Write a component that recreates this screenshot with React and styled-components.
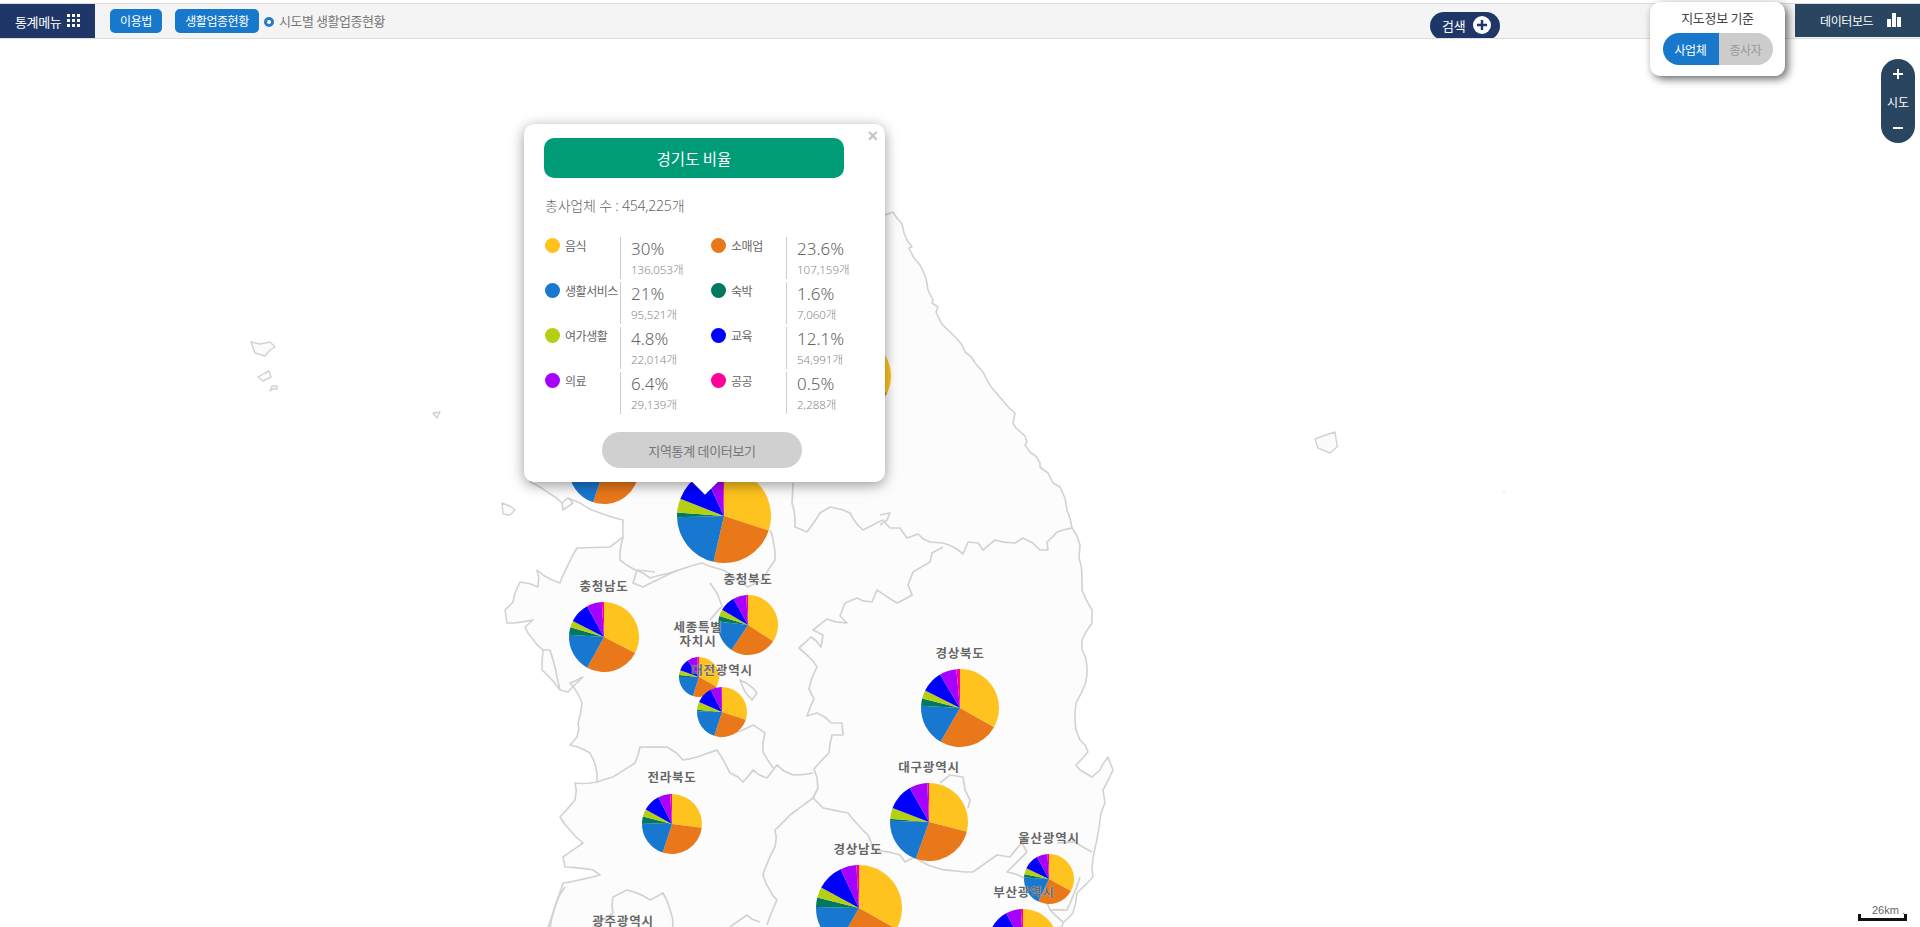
import React from "react";
import styled, { createGlobalStyle } from "styled-components";

const KR = `"Noto Sans CJK KR", "Noto Sans", sans-serif`;
const MAP_TOP = 39;
const COLORS = ["#ffc31f", "#e8781a", "#1878cf", "#00795f", "#b5cf12", "#0000ff", "#a600ff", "#ff0099"];

const GlobalStyle = createGlobalStyle`
  html, body { margin: 0; padding: 0; background: #fff; }
  * { box-sizing: border-box; }
`;

const Page = styled.div`
  position: relative;
  display: flex;
  flex-direction: column;
  height: 927px;
  padding-top: 3px;
  overflow: hidden;
  font-family: ${KR};
`;

const TopBar = styled.header`
  display: flex;
  align-items: stretch;
  flex: 0 0 36px;
  background: #f4f4f4;
  border-top: 1px solid #ddd;
  border-bottom: 1px solid #ddd;
  overflow: hidden;
`;

const MenuBlock = styled.div`
  display: flex;
  align-items: center;
  gap: 6px;
  width: 95px;
  padding-left: 15px;
  background: #1f3768;
  color: #fff;
  font-size: 13px;
  letter-spacing: -0.35px;
`;

const Crumbs = styled.div`
  display: flex;
  align-items: center;
  padding-left: 15px;
  margin-top: -1px;
`;

const BlueChip = styled.span`
  display: flex;
  align-items: center;
  justify-content: center;
  width: ${(p) => p.$w}px;
  height: 24px;
  margin-right: ${(p) => p.$gap}px;
  background: #1878cc;
  border-radius: 5px;
  color: #fff;
  font-size: 12px;
  letter-spacing: -0.45px;
`;

const Bullet = styled.i`
  width: 10px;
  height: 10px;
  margin: 2px 5px 0 0;
  border: 3px solid #2a78c8;
  border-radius: 50%;
  background: #fff;
`;

const CrumbText = styled.span`
  color: #777;
  font-size: 13px;
  letter-spacing: -0.45px;
`;

const SearchPill = styled.div`
  display: flex;
  align-items: center;
  gap: 7px;
  width: 70px;
  height: 28px;
  margin: 8px 0 0 auto;
  padding-left: 12px;
  padding-bottom: 2px;
  background: #1f3768;
  border-radius: 14px;
  color: #fff;
  font-size: 13px;
  letter-spacing: -0.1px;
`;

const DashBlock = styled.div`
  display: flex;
  align-items: center;
  gap: 14px;
  width: 125px;
  height: 34px;
  margin: -1px 0 0 295px;
  padding-left: 25px;
  background: #2a4560;
  color: #fff;
  font-size: 12px;
  letter-spacing: -0.4px;
`;

const InfoBox = styled.div`
  position: absolute;
  top: 2px;
  left: 1650px;
  width: 135px;
  height: 74px;
  padding-top: 6px;
  background: #fff;
  border-radius: 10px;
  box-shadow: 3px 3px 8px rgba(0, 0, 0, 0.6);
  text-align: center;
  color: #444;
  font-size: 13px;
  letter-spacing: -0.3px;
`;

const Toggle = styled.div`
  display: flex;
  width: 110px;
  height: 32px;
  margin: 6px auto 0;
  border-radius: 16px;
  overflow: hidden;
`;

const ToggleSide = styled.span`
  display: flex;
  align-items: center;
  justify-content: center;
  flex: ${(p) => (p.$on ? "0 0 56px" : "1")};
  background: ${(p) => (p.$on ? "#1878cc" : "#ccc")};
  color: ${(p) => (p.$on ? "#fff" : "#999")};
  font-size: 12px;
`;

const ZoomBar = styled.div`
  position: absolute;
  top: 59px;
  left: 1881px;
  display: flex;
  flex-direction: column;
  align-items: center;
  justify-content: space-between;
  width: 34px;
  height: 84px;
  padding: 9px 0;
  background: #2a4560;
  border-radius: 17px;
  color: #fff;
  font-size: 12px;
`;

const MapArea = styled.main`
  position: relative;
  flex: 1;
  background: repeating-linear-gradient(
    to bottom,
    #fff 0,
    #fff 48px,
    #fdfdfd 48px,
    #fdfdfd 49px,
    #fff 49px,
    #fff 256px
  );
`;

const MapSvg = styled.svg`
  display: block;
  width: 1920px;
  height: 888px;
`;

const Region = styled.span`
  position: absolute;
  left: ${(p) => p.$x}px;
  top: ${(p) => p.$y - MAP_TOP}px;
  transform: translate(-50%, -50%);
  color: #666;
  font-size: 12.5px;
  font-weight: 700;
  line-height: 14px;
  letter-spacing: 0.8px;
  text-align: center;
  white-space: pre;
  text-shadow: 0 0 1px #fff;
`;

const Popup = styled.section`
  position: absolute;
  left: 524px;
  top: ${124 - MAP_TOP}px;
  width: 361px;
  height: 358px;
  padding: 14px 20px 0;
  background: #fff;
  border-radius: 10px;
  box-shadow: 0 3px 14px rgba(0, 0, 0, 0.4);
`;

const PopupTip = styled.i`
  position: absolute;
  left: 172px;
  bottom: -9px;
  width: 18px;
  height: 18px;
  background: #fff;
  transform: rotate(45deg);
`;

const CloseMark = styled.span`
  position: absolute;
  right: 7px;
  top: 2px;
  color: #c3c3c3;
  font-family: "Liberation Sans", sans-serif;
  font-size: 18px;
  font-weight: 700;
  line-height: 20px;
`;

const PopupTitle = styled.h2`
  display: flex;
  align-items: center;
  justify-content: center;
  width: 300px;
  height: 40px;
  margin: 0;
  background: #009b77;
  border-radius: 10px;
  color: #fff;
  font-size: 15.5px;
  font-weight: 400;
`;

const Total = styled.p`
  margin: 19px 0 0 1px;
  color: #666;
  font-family: "Noto Sans", ${KR};
  font-size: 14px;
  font-weight: 300;
  line-height: 18px;
  letter-spacing: -0.2px;
`;

const StatGrid = styled.div`
  display: grid;
  grid-template-columns: 166px 1fr;
  grid-auto-rows: 42px;
  row-gap: 3px;
  margin: 22px 0 0 1px;
`;

const StatItem = styled.div`
  display: flex;
`;

const StatName = styled.div`
  display: flex;
  align-items: center;
  gap: 5px;
  flex: 0 0 75px;
  height: 16px;
  color: #666;
  font-size: 12px;
  letter-spacing: -0.45px;
  white-space: nowrap;
`;

const Dot = styled.i`
  flex: 0 0 15px;
  height: 15px;
  border-radius: 50%;
  background: ${(p) => p.$c};
`;

const StatValue = styled.div`
  padding-left: 10px;
  border-left: 1px solid #ccc;
  font-family: "Noto Sans", ${KR};
`;

const Percent = styled.div`
  color: #666;
  font-size: 17px;
  font-weight: 300;
  line-height: 23px;
`;

const Count = styled.div`
  margin-top: 2px;
  color: #888;
  font-size: 11.5px;
  font-weight: 300;
  line-height: 15px;
`;

const DataButton = styled.div`
  display: flex;
  align-items: center;
  justify-content: center;
  width: 200px;
  height: 36px;
  margin: 18px 0 0 58px;
  background: #d0d0d0;
  border-radius: 18px;
  color: #777;
  font-size: 13px;
  letter-spacing: -0.3px;
`;

const Scale = styled.div`
  position: absolute;
  left: 1858px;
  top: ${904 - MAP_TOP}px;
  width: 49px;
  height: 17px;
  padding-left: 11px;
  border: 3px solid #111;
  border-top: 0;
  color: #666;
  font-family: "Liberation Sans", sans-serif;
  font-size: 11px;
  line-height: 13px;
  white-space: nowrap;
  border-image: linear-gradient(to bottom, transparent 0, transparent 11px, #111 11px) 3;
`;

// split long segments and nudge the points so coast lines look hand-surveyed
const rough = (list) => {
  const out = [];
  list.forEach((p, i) => {
    out.push(p);
    const q = list[i + 1];
    if (!q) return;
    const len = Math.hypot(q[0] - p[0], q[1] - p[1]);
    const steps = Math.floor(len / 7);
    for (let s = 1; s < steps; s++) {
      const t = s / steps;
      const n = Math.sin(p[0] * 12.9 + p[1] * 78.2 + s * 37.7) * 1.3;
      out.push([
        +(p[0] + (q[0] - p[0]) * t + n).toFixed(1),
        +(p[1] + (q[1] - p[1]) * t - n * 0.7).toFixed(1),
      ]);
    }
  });
  return out;
};

const pts = (list) => rough(list).map((p) => p.join(",")).join(" ");

const LAND = [
  [885,215],[893,212],[902,224],[904,233],[912,247],[909,248],[920,265],[926,278],[928,290],[933,300],[932,303],[938,307],[936,312],[938,316],[948,330],[958,340],[962,345],[965,352],[975,363],[983,372],[987,380],[1015,413],[1013,423],[1016,428],[1025,436],[1027,442],[1025,445],[1030,452],[1040,463],[1040,467],[1048,473],[1053,483],[1060,487],[1065,498],[1067,510],[1072,528],[1080,545],[1079,558],[1082,577],[1082,590],[1092,610],[1092,623],[1082,640],[1082,650],[1087,667],[1085,685],[1076,703],[1076,730],[1080,740],[1088,752],[1076,765],[1080,770],[1092,777],[1100,770],[1108,757],[1113,770],[1103,790],[1105,803],[1100,820],[1095,848],[1093,858],[1093,877],[1077,893],[1073,913],[1063,923],[1062,927],
  [548,927],[563,883],[600,875],[593,870],[565,867],[563,857],[583,843],[560,817],[575,800],[575,783],[597,782],[597,773],[590,753],[570,745],[577,737],[578,723],[582,703],[570,683],[583,677],[568,692],[560,690],[542,670],[543,650],[525,627],[533,620],[507,623],[505,610],[513,602],[515,593],[520,582],[538,587],[537,570],[560,583],[577,548],[610,547],[623,537],[623,520],[600,513],[580,503],[568,498],[562,503],[530,482],[530,300],
];

const BORDERS = [
  // gyeonggi / gangwon
  [[793,483],[792,503],[795,527],[807,532],[820,513],[830,507],[850,513],[863,530],[883,520],[890,528],[900,528],[907,538],[918,534],[930,542],[943,543],[963,554],[968,542],[978,543],[983,550],[995,540],[1015,543],[1023,538],[1040,550],[1048,550],[1047,542],[1057,532],[1072,528]],
  [[880,515],[890,513],[887,520],[880,525]],
  // gangwon / gyeongbuk, chungbuk
  [[943,547],[932,553],[930,562],[913,572],[908,585],[912,595],[897,603],[877,590],[872,602],[857,598],[845,603],[840,616],[847,623],[827,619],[813,630],[823,635],[821,647],[811,637],[799,648],[808,656],[817,667],[809,689],[814,699],[807,716],[817,713],[831,723],[842,723],[843,735],[832,735],[829,753],[814,769],[818,788],[813,798]],
  // jeonbuk north
  [[813,773],[793,775],[777,765],[773,770],[767,778],[753,770],[743,782],[730,773],[717,750],[697,757],[683,760],[667,747],[640,747],[635,763],[613,777],[597,782]],
  // chungnam / chungbuk
  [[773,768],[763,752],[765,733],[753,725],[743,730],[720,737],[705,715]],
  [[770,530],[775,560],[763,580],[748,587],[723,570],[702,563],[670,573],[650,578],[643,573],[620,560],[623,537]],
  // sejong, daejeon
  [[710,583],[717,593],[722,606],[710,620]],
  [[757,693],[740,680],[745,692],[752,700],[757,693]],
  [[643,587],[633,583],[637,570],[655,572]],
  [[678,570],[643,587]],
  // gyeongnam north and coast side
  [[813,798],[823,808],[848,813],[868,835],[873,850],[900,855],[905,862],[915,857],[937,868],[973,872],[997,855],[1010,857],[1022,843],[1027,852],[1007,872],[1027,880],[1048,905],[1050,910],[1063,922]],
  [[1057,843],[1075,842],[1092,852]],
  [[1080,877],[1067,910],[1050,910]],
  // daegu
  [[940,783],[950,775],[963,777],[965,790],[970,800],[968,808]],
  // jeonbuk / jeonnam
  [[813,798],[790,815],[775,830],[775,847],[763,875],[777,900],[767,925]],
  // gwangju
  [[593,927],[613,913],[613,897],[627,890],[650,900],[663,893],[670,910],[673,927]],
  [[550,927],[557,900],[565,887]],
  [[730,927],[747,915],[760,922]],
  // islet rings
  [[562,503],[563,510],[573,503],[568,498]],
  [[542,650],[550,650],[557,677],[560,690]],
];

const ISLANDS = [
  [[251,342],[260,344],[270,342],[275,347],[270,350],[265,356],[255,353]],
  [[258,377],[265,373],[269,371],[271,377],[263,381]],
  [[270,391],[272,386],[277,386],[277,389],[273,389]],
  [[433,413],[440,412],[437,418]],
  [[1315,439],[1323,436],[1335,432],[1337,445],[1338,446],[1330,453],[1318,448]],
  [[502,503],[510,506],[515,510],[510,515],[503,514]],
];

const PIES = [
  { x: 851, y: 376, r: 40, v: [32, 25, 18, 3, 4, 10, 7, 1] },
  { x: 604, y: 469, r: 35, v: [30, 25, 21, 1.5, 5, 11, 6, 0.5] },
  { x: 724, y: 516, r: 47, v: [30, 23.6, 21, 1.6, 4.8, 12.1, 6.4, 0.5] },
  { x: 604, y: 637, r: 35, v: [32.5, 25.5, 18, 3.5, 3, 9.5, 7, 1] },
  { x: 748, y: 625, r: 30, v: [34, 25, 17.5, 3, 3.5, 8.5, 7, 1] },
  { x: 699, y: 677, r: 20, v: [33, 22, 20, 1.5, 4, 10, 8, 1.5] },
  { x: 722, y: 712, r: 25, v: [30, 25, 20.5, 1, 5, 11, 7.3, 0.2] },
  { x: 672, y: 824, r: 30, v: [27, 28, 20.5, 3.5, 4, 9.5, 6.5, 1] },
  { x: 960, y: 708, r: 39, v: [33, 25, 17.5, 3, 3.5, 9, 7, 1.5] },
  { x: 929, y: 822, r: 39, v: [29, 26.5, 20, 0.8, 4.5, 11, 7.5, 0.7] },
  { x: 859, y: 908, r: 43, v: [33, 25, 17, 3.5, 4, 10, 6, 1] },
  { x: 1049, y: 879, r: 25, v: [33, 24, 19, 2, 4, 10, 7, 1] },
  { x: 1023, y: 944, r: 35, v: [30, 24, 21, 1, 5, 11, 7, 1] },
];

const REGIONS = [
  { name: "충청남도", x: 604, y: 586 },
  { name: "충청북도", x: 748, y: 579 },
  { name: "세종특별\n자치시", x: 698, y: 634 },
  { name: "대전광역시", x: 722, y: 670 },
  { name: "전라북도", x: 672, y: 777 },
  { name: "경상북도", x: 960, y: 653 },
  { name: "대구광역시", x: 929, y: 767 },
  { name: "경상남도", x: 858, y: 849 },
  { name: "울산광역시", x: 1049, y: 838 },
  { name: "부산광역시", x: 1024, y: 892 },
  { name: "광주광역시", x: 623, y: 921 },
];

const STATS = [
  { name: "음식", c: COLORS[0], pct: "30%", n: "136,053개" },
  { name: "소매업", c: COLORS[1], pct: "23.6%", n: "107,159개" },
  { name: "생활서비스", c: COLORS[2], pct: "21%", n: "95,521개" },
  { name: "숙박", c: COLORS[3], pct: "1.6%", n: "7,060개" },
  { name: "여가생활", c: COLORS[4], pct: "4.8%", n: "22,014개" },
  { name: "교육", c: COLORS[5], pct: "12.1%", n: "54,991개" },
  { name: "의료", c: COLORS[6], pct: "6.4%", n: "29,139개" },
  { name: "공공", c: COLORS[7], pct: "0.5%", n: "2,288개" },
];

const Pie = ({ x, y, r, v }) => {
  const total = v.reduce((a, b) => a + b, 0);
  let acc = 0;
  return (
    <g>
      {v.map((val, i) => {
        const a0 = (acc / total) * Math.PI * 2;
        acc += val;
        const a1 = (acc / total) * Math.PI * 2;
        const large = a1 - a0 > Math.PI ? 1 : 0;
        const d = `M${x} ${y}L${x + r * Math.sin(a0)} ${y - r * Math.cos(a0)}A${r} ${r} 0 ${large} 1 ${x + r * Math.sin(a1)} ${y - r * Math.cos(a1)}Z`;
        return <path key={i} d={d} fill={COLORS[i]} />;
      })}
    </g>
  );
};

export default function App() {
  return (
    <Page>
      <GlobalStyle />
      <TopBar>
        <MenuBlock>
          통계메뉴
          <svg width="14" height="14" viewBox="0 0 14 14" fill="#fff">
            {[0, 5, 10].map((gy) =>
              [0, 5, 10].map((gx) => <rect key={`${gx}${gy}`} x={gx} y={gy} width="3" height="3" />)
            )}
          </svg>
        </MenuBlock>
        <Crumbs>
          <BlueChip $w={52} $gap={13}>이용법</BlueChip>
          <BlueChip $w={84} $gap={5}>생활업종현황</BlueChip>
          <Bullet />
          <CrumbText>시도별 생활업종현황</CrumbText>
        </Crumbs>
        <SearchPill>
          검색
          <svg width="18" height="18" viewBox="0 0 18 18">
            <circle cx="9" cy="9" r="9" fill="#fff" />
            <path d="M9 4v10M4 9h10" stroke="#1f3768" strokeWidth="2.4" />
          </svg>
        </SearchPill>
        <DashBlock>
          데이터보드
          <svg width="14" height="14" viewBox="0 0 14 14" fill="#fff">
            <rect x="0" y="6" width="4" height="8" />
            <rect x="5" y="0" width="4" height="14" />
            <rect x="10" y="4" width="4" height="10" />
          </svg>
        </DashBlock>
      </TopBar>

      <MapArea>
        <MapSvg viewBox={`0 ${MAP_TOP} 1920 888`}>
          <polygon points={pts(LAND)} fill="#fcfcfc" stroke="#d2d2d2" strokeWidth="1.6" strokeLinejoin="round" />
          {ISLANDS.map((isle, i) => (
            <polygon key={i} points={pts(isle)} fill="#fbfbfb" stroke="#d2d2d2" strokeWidth="1.4" strokeLinejoin="round" />
          ))}
          <circle cx="1504" cy="492" r="0.8" fill="#ddd" />
          {BORDERS.map((line, i) => (
            <polyline key={i} points={pts(line)} fill="none" stroke="#d2d2d2" strokeWidth="1.7" strokeLinejoin="round" />
          ))}
          {PIES.map((pie, i) => (
            <Pie key={i} {...pie} />
          ))}
        </MapSvg>

        {REGIONS.map((r) => (
          <Region key={r.name} $x={r.x} $y={r.y}>{r.name}</Region>
        ))}

        <Popup>
          <PopupTip />
          <CloseMark>×</CloseMark>
          <PopupTitle>경기도 비율</PopupTitle>
          <Total>총사업체 수 : 454,225개</Total>
          <StatGrid>
            {STATS.map((s) => (
              <StatItem key={s.name}>
                <StatName>
                  <Dot $c={s.c} />
                  {s.name}
                </StatName>
                <StatValue>
                  <Percent>{s.pct}</Percent>
                  <Count>{s.n}</Count>
                </StatValue>
              </StatItem>
            ))}
          </StatGrid>
          <DataButton>지역통계 데이터보기</DataButton>
        </Popup>

        <Scale>26km .</Scale>
      </MapArea>

      <InfoBox>
        지도정보 기준
        <Toggle>
          <ToggleSide $on>사업체</ToggleSide>
          <ToggleSide>종사자</ToggleSide>
        </Toggle>
      </InfoBox>

      <ZoomBar>
        <svg width="12" height="12" viewBox="0 0 12 12">
          <path d="M6 1v10M1 6h10" stroke="#fff" strokeWidth="2" />
        </svg>
        시도
        <svg width="12" height="12" viewBox="0 0 12 12">
          <path d="M1 6h10" stroke="#fff" strokeWidth="2" />
        </svg>
      </ZoomBar>
    </Page>
  );
}
